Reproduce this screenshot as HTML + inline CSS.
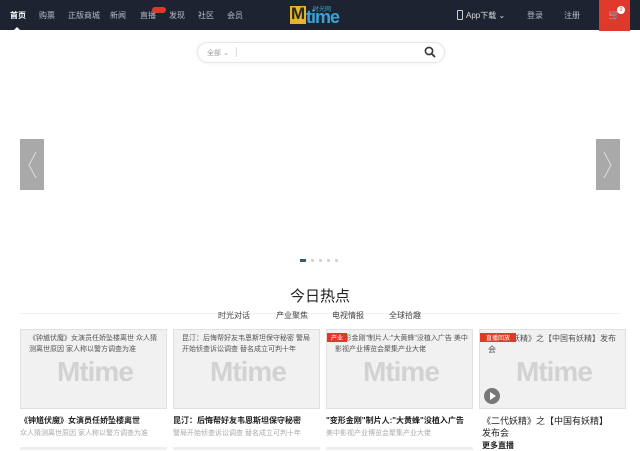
<!DOCTYPE html>
<html><head><meta charset="utf-8"><style>
*{margin:0;padding:0;box-sizing:border-box}
body{width:640px;height:450px;overflow:hidden;background:#fff;font-family:"Liberation Sans","Noto Sans CJK SC",sans-serif;position:relative}
.hdr{position:absolute;left:0;top:0;width:640px;height:30px;background:#1d2331}
.nav{position:absolute;top:10px;font-size:8px;color:#b8bcc4}
.ab{position:absolute}
.card{position:absolute;top:329px;width:147px;height:80px;background:#f1f1f1;border:1px solid #e0e0e0}
.ct{position:absolute;left:8px;top:3px;right:4px;font-size:7px;line-height:11px;color:#555}
.wm{position:absolute;left:36px;top:26px;font-size:28px;font-weight:bold;color:#d2d2d2;letter-spacing:-1px}
.tt{position:absolute;top:415px;font-size:8px;font-weight:bold;color:#222;width:147px;line-height:12px}
.st{position:absolute;top:428px;font-size:7px;color:#aaa}
</style></head><body>
<div class="hdr"></div>
<div class="nav" style="left:10px;color:#fff;font-weight:bold">首页</div>
<div class="ab" style="left:14px;top:24px;width:0;height:0;border:3px solid transparent;border-bottom-color:#fff"></div>
<div class="nav" style="left:39px">购票</div>
<div class="nav" style="left:68px">正版商城</div>
<div class="nav" style="left:110px">新闻</div>
<div class="nav" style="left:140px">直播</div>
<div class="ab" style="left:152px;top:7px;width:14px;height:6px;border-radius:3px;background:#e0382a"></div>
<div class="nav" style="left:169px">发现</div>
<div class="nav" style="left:198px">社区</div>
<div class="nav" style="left:227px">会员</div>
<div class="ab" style="left:290px;top:6px;width:16px;height:18px;background:#e5b52a"></div>
<div class="ab" style="left:291px;top:4px;font-size:17px;font-weight:bold;color:#2a2a1a">M</div>
<div class="ab" style="left:306px;top:7px;font-size:18px;font-weight:bold;color:#3aa4d8;letter-spacing:-1px">time</div>
<div class="ab" style="left:313px;top:4px;font-size:6px;color:#3aa4d8">时光网</div>
<div class="ab" style="left:457px;top:10px;width:6px;height:10px;border:1px solid #ccc;border-radius:1px"></div>
<div class="nav" style="left:466px;color:#ddd">App下载 ⌄</div>
<div class="nav" style="left:527px">登录</div>
<div class="nav" style="left:564px">注册</div>
<div class="ab" style="left:599px;top:0;width:31px;height:31px;background:#e0382a"></div>
<div class="ab" style="left:608px;top:10px;font-size:10px;color:#fff">🛒</div>
<div class="ab" style="left:617px;top:6px;width:8px;height:8px;border-radius:50%;background:#fff;font-size:5px;color:#e0382a;text-align:center;line-height:8px">0</div>

<div class="ab" style="left:197px;top:42px;width:248px;height:21px;border:1px solid #e6e6e6;border-radius:11px;box-shadow:0 0 3px #eee"></div>
<div class="ab" style="left:207px;top:48px;font-size:7px;color:#999">全部 ⌄</div>
<div class="ab" style="left:236px;top:47px;width:1px;height:10px;background:#ddd"></div>
<svg class="ab" style="left:424px;top:46px" width="12" height="12"><circle cx="5" cy="5" r="3.6" fill="none" stroke="#333" stroke-width="1.6"/><line x1="7.6" y1="7.6" x2="11" y2="11" stroke="#333" stroke-width="1.8"/></svg>

<div class="ab" style="left:20px;top:139px;width:24px;height:51px;background:#a9a9a9"></div>
<svg class="ab" style="left:20px;top:139px" width="24" height="51"><polyline points="16,13 9,26 16,39" fill="none" stroke="#ddd" stroke-width="1"/></svg>
<div class="ab" style="left:596px;top:139px;width:24px;height:51px;background:#a9a9a9"></div>
<svg class="ab" style="left:596px;top:139px" width="24" height="51"><polyline points="8,13 15,26 8,39" fill="none" stroke="#ddd" stroke-width="1"/></svg>
<div class="ab" style="left:300px;top:259px;width:6px;height:3px;background:#3b5a7a"></div>
<div class="ab" style="left:311px;top:259px;width:3px;height:3px;border-radius:50%;background:#ccc"></div>
<div class="ab" style="left:319px;top:259px;width:3px;height:3px;border-radius:50%;background:#ccc"></div>
<div class="ab" style="left:327px;top:259px;width:3px;height:3px;border-radius:50%;background:#ccc"></div>
<div class="ab" style="left:335px;top:259px;width:3px;height:3px;border-radius:50%;background:#ccc"></div>

<div class="ab" style="left:0;width:640px;text-align:center;top:285px;font-size:15px;color:#222">今日热点</div>
<div class="ab" style="left:20px;top:313px;width:600px;height:1px;background:#f0f0f0"></div>
<div class="ab" style="left:218px;top:310px;font-size:8px;color:#444">时光对话</div>
<div class="ab" style="left:276px;top:310px;font-size:8px;color:#444">产业聚焦</div>
<div class="ab" style="left:332px;top:310px;font-size:8px;color:#444">电视情报</div>
<div class="ab" style="left:389px;top:310px;font-size:8px;color:#444">全球拾趣</div>

<div class="card" style="left:20px"><div class="ct">《钟馗伏魔》女演员任娇坠楼离世 众人猜测离世原因 家人称以警方调查为准</div><div class="wm">Mtime</div></div>
<div class="card" style="left:173px"><div class="ct">昆汀：后悔帮好友韦恩斯坦保守秘密 警局开始侦查诉讼调查 替名成立可判十年</div><div class="wm">Mtime</div></div>
<div class="card" style="left:326px"><div class="ct">"变形金刚"制片人:"大黄蜂"没植入广告 美中影视产业博览会聚集产业大佬</div><div class="ab" style="left:0;top:3px;width:20px;height:9px;background:#e0382a;color:#fff;font-size:6px;text-align:center">产业</div><div class="wm">Mtime</div></div>
<div class="card" style="left:479px"><div class="ct" style="font-size:8px">《二代妖精》之【中国有妖精】发布会</div><div class="ab" style="left:0;top:3px;width:36px;height:9px;background:#e0382a;color:#fff;font-size:6px;text-align:center">直播回放</div><div class="wm">Mtime</div><div class="ab" style="left:4px;top:58px;width:16px;height:16px;border-radius:50%;background:#777"></div><div class="ab" style="left:10px;top:62px;width:0;height:0;border-left:6px solid #fff;border-top:4px solid transparent;border-bottom:4px solid transparent"></div></div>

<div class="tt" style="left:20px">《钟馗伏魔》女演员任娇坠楼离世</div>
<div class="st" style="left:20px">众人猜测离世原因 家人称以警方调查为准</div>
<div class="tt" style="left:173px">昆汀：后悔帮好友韦恩斯坦保守秘密</div>
<div class="st" style="left:173px">警局开始侦查诉讼调查 替名成立可判十年</div>
<div class="tt" style="left:326px">"变形金刚"制片人:"大黄蜂"没植入广告</div>
<div class="st" style="left:326px">美中影视产业博览会聚集产业大佬</div>
<div class="tt" style="left:482px;font-weight:normal;color:#222;width:132px;font-size:9px">《二代妖精》之【中国有妖精】发布会</div>
<div class="ab" style="left:482px;top:440px;font-size:8px;font-weight:bold;color:#222">更多直播</div>
<div class="ab" style="left:20px;top:447px;width:147px;height:3px;background:#eee"></div>
<div class="ab" style="left:173px;top:447px;width:147px;height:3px;background:#eee"></div>
<div class="ab" style="left:326px;top:447px;width:147px;height:3px;background:#eee"></div>
</body></html>
